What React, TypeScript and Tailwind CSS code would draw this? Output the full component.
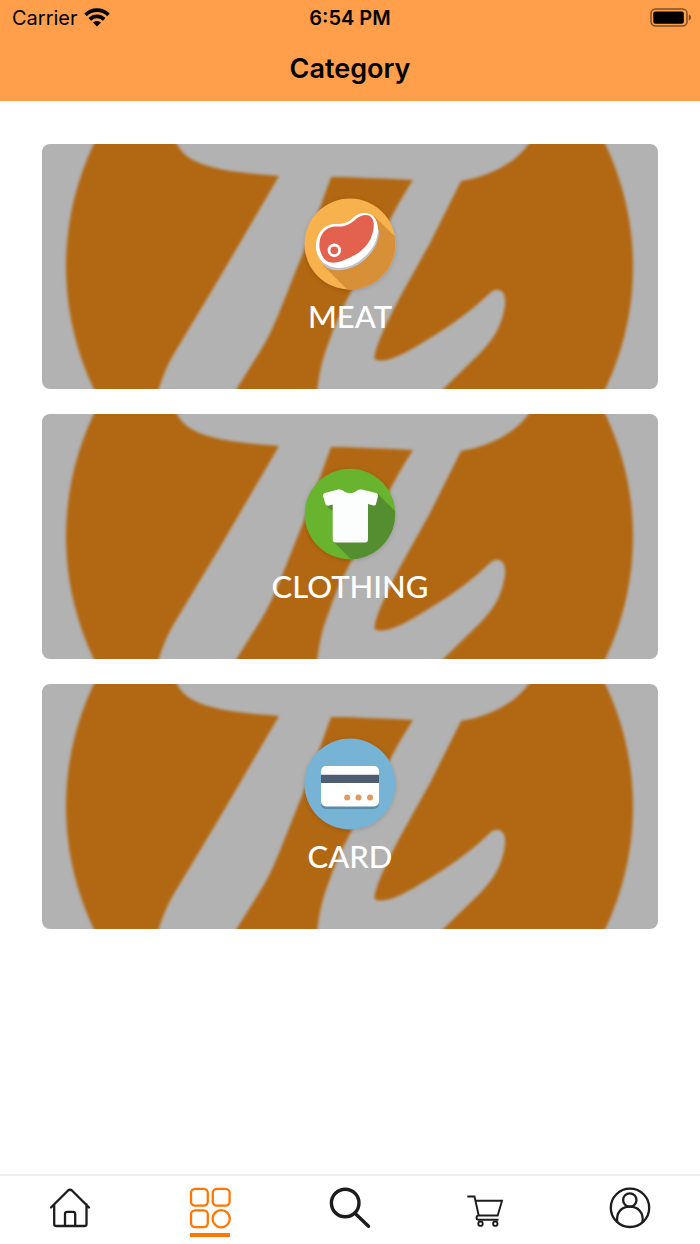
import type { ReactNode } from "react";

function WifiIcon() {
  return (
    <svg viewBox="0 0 26 20" className="h-5 w-[26px]" aria-hidden="true">
      <g fill="none" stroke="#000" strokeWidth="3.700">
        <path d="M1.500 6.800C8 .6 18 .6 24.500 6.800" />
        <path d="M5.800 11.300C10 7.400 16 7.400 20.200 11.300" />
      </g>
      <path d="M13 18.500 9 14.600c2.200-2.200 5.800-2.200 8 0Z" />
    </svg>
  );
}

function BatteryIcon() {
  return (
    <svg viewBox="0 0 42 20" className="h-5 w-[42px]" aria-hidden="true">
      <rect x="1" y="1" width="36" height="17" rx="4.500" fill="none" stroke="#000" strokeOpacity=".5" strokeWidth="1.500" />
      <rect x="3.300" y="3.500" width="30.500" height="12.300" rx="2" />
      <path d="M38.800 6.500v6c1.400-.5 2.200-1.600 2.200-3s-.8-2.500-2.200-3Z" fillOpacity=".5" />
    </svg>
  );
}

function CardBackdrop({ id }: { id: string }) {
  return (
    <svg
      viewBox="0 0 616 245"
      preserveAspectRatio="xMidYMid slice"
      className="absolute inset-0 h-full w-full"
      aria-hidden="true"
    >
      <defs>
        <filter id={id} x="-5%" y="-15%" width="110%" height="130%" colorInterpolationFilters="sRGB">
          <feGaussianBlur stdDeviation="1.400" />
        </filter>
      </defs>
      <rect width="616" height="245" fill="#b2b2b2" />
      <g filter={`url(#${id})`}>
        <circle cx="307.500" cy="122.500" r="283.500" fill="#b26712" />
        <path
          fill="#b2b2b2"
          d="M130-10C136 5 143 12 151 16C170 26 198 29 237 32L178 133L136 203C126 219 121 230 113 257H187L217 209C226 195 232 181 237 169L265 99L289 33C315 33 345 35 371 36C364 47 357 58 351 70L310 146C301 163 294 177 288 195C280 215 277 228 274 257H389L432 215C448 200 457 187 461 171C465 157 463 149 459 147C456 145 452 145 448 149C430 166 410 181 385 196C370 205 355 214 344 216C337 217 332 217 332.500 213C335 199 343 182 358 153L388 99L419 37C431 35 450 30 465 20C476 13 484 5 494-10Z"
        />
      </g>
    </svg>
  );
}

function MeatIcon() {
  return (
    <svg viewBox="0 0 92 92" className="size-[92px] drop-shadow-sm" aria-hidden="true">
      <circle cx="46" cy="46" r="45.500" fill="#f8b24d" />
      <path d="M70 18 90.500 38A45.500 45.500 0 0 1 43 91.500L19 67Z" fill="#d78f38" />
      <path d="M13 50C16 69 25 73.500 39 72C59 69 76 50 75 32L70 25L20 60Z" fill="#c3c3cc" />
      <path
        d="M12 46C13 34 21 26 31 26C40 26 44 25 50 19C55 15 63 13 69 18C76 25 75 37 70 47C62 61 48 70 35 70C20 69 11 60 12 46Z"
        fill="#fff"
      />
      <path
        d="M15.500 45C16 35 23 28.500 32 28.500C41 29 45 27 52 21C58 16 65 16 68 20C71 25 70 33 66.500 41C60 54 48 59 40 62C31 66 23 66 19 59C16 54 15 50 15.500 45Z"
        fill="#e2624f"
      />
      <circle cx="30.300" cy="52.300" r="5.300" fill="#e2624f" stroke="#fff" strokeWidth="2.800" />
    </svg>
  );
}

function ShirtIcon() {
  return (
    <svg viewBox="0 0 92 92" className="size-[92px] drop-shadow-sm" aria-hidden="true">
      <circle cx="46" cy="46" r="45.300" fill="#68b42f" />
      <path d="M74 26 91 43A45.300 45.300 0 0 1 47 91.300L30 74V44L22 38 45 28Z" fill="#548e30" />
      <path
        d="M21 25 34 21.500Q37 21 39 22.500C43 26 49 26 53 22.500Q55 21 58 21.500L72 25Q74.500 26 74 28L72 36Q71.500 38 69.500 37.500L64 36V71Q64 74.500 61 74.500H32Q28.700 74.500 28.700 71V36.500L24 37.800Q22 38 21.500 36L19 28Q18.500 26 21 25Z"
        fill="#fcfefd"
      />
    </svg>
  );
}

function CreditCardIcon() {
  return (
    <svg viewBox="0 0 92 92" className="size-[92px] drop-shadow-sm" aria-hidden="true">
      <circle cx="46" cy="46" r="45.500" fill="#77b3d5" />
      <rect x="17" y="31" width="58" height="40" rx="5" fill="#568ca8" />
      <rect x="17" y="28" width="58" height="40.500" rx="5" fill="#fff" />
      <path d="M17 36.700h58v8.300H17Z" fill="#4f5d73" />
      <g fill="#e0995e">
        <circle cx="43.200" cy="59.500" r="3" />
        <circle cx="54.500" cy="59.500" r="3" />
        <circle cx="66" cy="59.500" r="3" />
      </g>
    </svg>
  );
}

function TabIcon({ children }: { children: ReactNode }) {
  return (
    <svg
      viewBox="0 0 42 42"
      className="size-[42px] overflow-visible"
      fill="none"
      stroke="currentColor"
      strokeWidth="2.300"
      strokeLinecap="round"
      strokeLinejoin="round"
      aria-hidden="true"
    >
      {children}
    </svg>
  );
}

const categories = [
  { name: "MEAT", icon: <MeatIcon /> },
  { name: "CLOTHING", icon: <ShirtIcon /> },
  { name: "CARD", icon: <CreditCardIcon /> },
];

const tabs = [
  {
    name: "Home",
    icon: (
      <TabIcon>
        <path d="M2 20.500 18.800 3.700Q21 1.800 23.200 3.700L40 20.500M5.200 17.500V37Q5.200 39 7.200 39H35.500Q37.500 39 37.500 37V17.500M16 38.500V27Q16 24.800 18.200 24.800H24Q26.200 24.800 26.200 27V38.500" />
      </TabIcon>
    ),
  },
  {
    name: "Category",
    icon: (
      <TabIcon>
        <rect x="2" y="1.800" width="16.800" height="16.800" rx="4" />
        <rect x="23.800" y="1.800" width="16.800" height="16.800" rx="4" />
        <rect x="2" y="23.300" width="16.800" height="16.800" rx="4" />
        <circle cx="32.200" cy="31.700" r="8.600" />
      </TabIcon>
    ),
  },
  {
    name: "Search",
    icon: (
      <TabIcon>
        <circle cx="16.200" cy="16" r="13.800" strokeWidth="3.400" />
        <path d="M26.200 26.500 39.500 39.300" strokeWidth="3.400" />
      </TabIcon>
    ),
  },
  {
    name: "Cart",
    icon: (
      <TabIcon>
        <g strokeWidth="1.900" strokeLinecap="butt" strokeLinejoin="miter">
          <path d="M-1.700 9.500H5.500L9.700 28.500H28.700L33 13.800H6.500M9.700 28.500Q7.500 28.700 7.500 30.700 7.500 32.700 9.700 32.700H29.500" />
          <circle cx="11.500" cy="36.700" r="2.200" />
          <circle cx="26.300" cy="36.700" r="2.200" />
        </g>
      </TabIcon>
    ),
  },
  {
    name: "Profile",
    icon: (
      <TabIcon>
        <circle cx="21" cy="20.800" r="19.200" />
        <circle cx="20.800" cy="13" r="6.700" />
        <path d="M8.300 34.500C7 26 12 19.700 20.800 19.700S34.700 26 33.500 34.500" />
      </TabIcon>
    ),
  },
];

export default function App() {
  return (
    <div className="flex min-h-screen flex-col bg-white font-['Inter',sans-serif] text-black">
      <header className="bg-[#ff9f4c] pb-3.5">
        <div className="grid h-9 grid-cols-3 items-center px-3 text-xl">
          <div className="flex items-center gap-1.5">
            <span>Carrier</span>
            <WifiIcon />
          </div>
          <time className="text-center font-semibold">6:54 PM</time>
          <div className="-mr-1 flex justify-end">
            <BatteryIcon />
          </div>
        </div>
        <h1 className="pt-3.5 text-center text-[27px] leading-[37px] font-semibold">Category</h1>
      </header>

      <main className="flex flex-1 flex-col gap-[25px] px-[42px] pt-[43px] pb-6">
        {categories.map(({ name, icon }) => (
          <button
            key={name}
            type="button"
            className="relative flex h-[245px] flex-col items-center overflow-hidden rounded-lg pt-[54px] font-['Lato',sans-serif] text-[31px] leading-[52px] font-medium text-white"
          >
            <CardBackdrop id={`soft-${name}`} />
            <span className="relative">{icon}</span>
            <span className="relative">{name}</span>
          </button>
        ))}
      </main>

      <nav className="grid h-[70px] grid-cols-5 border-t-2 border-[#f0f0f0]" aria-label="Main">
        {tabs.map(({ name, icon }) => (
          <a
            key={name}
            href={`#${name.toLowerCase()}`}
            aria-label={name}
            aria-current={name === "Category" ? "page" : undefined}
            className="flex flex-col items-center gap-1 pt-[11px] text-[#1c1c1e] aria-[current=page]:text-[#ff7500]"
          >
            {icon}
            {name === "Category" && <span className="h-1 w-10 bg-[#ff7500]" />}
          </a>
        ))}
      </nav>
    </div>
  );
}
